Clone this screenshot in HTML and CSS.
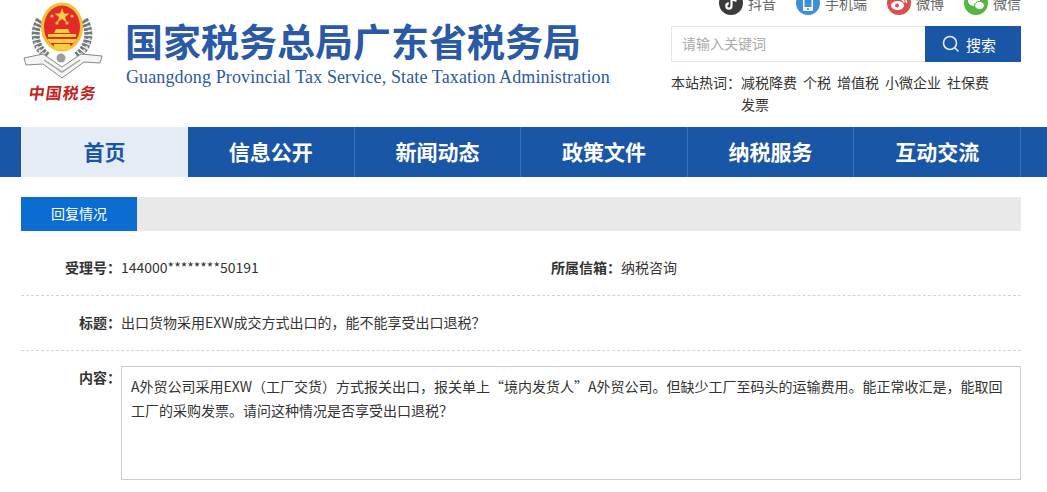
FILE: index.html
```html
<!DOCTYPE html>
<html>

<head>
    <meta charset="utf-8">
    <title>回复情况</title>
    <link rel="stylesheet" href="styles.css">
</head>

<body>
    <div class="header">
        <div class="logo">
            <svg class="emblem" viewBox="21 2 82 78" width="82" height="78">
                <!-- wreath -->
                <g fill="none" stroke="#74797d" stroke-width="8" stroke-dasharray="3 1.200">
                    <path d="M40 20 C33 31 34 46 47 56"/>
                    <path d="M84 20 C91 31 90 46 77 56"/>
                </g>
                <g fill="none" stroke="#e4e5e6" stroke-width="2.500" stroke-dasharray="2 2.200">
                    <path d="M38 22 C32 32 33 46 44 55"/>
                    <path d="M86 22 C92 32 91 46 80 55"/>
                </g>
                <!-- ribbon -->
                <path d="M24 58 L43 54 L62 67 L81 54 L102 56 L100 63 L84 62 L62 78 L43 64 L26 65 Z" fill="#f4f4f4" stroke="#85898c" stroke-width="1"/>
                <path d="M44 60 L62 72 L80 60" fill="none" stroke="#a3a6a8" stroke-width="1.500"/>
                <circle cx="61" cy="58" r="4.500" fill="#9a9da0"/>
                <!-- shield -->
                <ellipse cx="62" cy="27" rx="21" ry="24.500" fill="#f2c230"/>
                <ellipse cx="62" cy="27" rx="18" ry="21.500" fill="#e4292a"/>
                <polygon points="62,8 64,13.500 69.500,13.500 65,17 66.800,22.500 62,19 57.200,22.500 59,17 54.500,13.500 60,13.500" fill="#f6cf3d"/>
                <circle cx="52" cy="16" r="1.600" fill="#f6cf3d"/>
                <circle cx="72" cy="16" r="1.600" fill="#f6cf3d"/>
                <circle cx="57" cy="23" r="1.600" fill="#f6cf3d"/>
                <circle cx="67" cy="23" r="1.600" fill="#f6cf3d"/>
                <path d="M54 33 L56 29 H68 L70 33 Z" fill="#f6cf3d"/>
                <rect x="48" y="34" width="28" height="3" fill="#f6cf3d"/>
                <path d="M47 39 H77 L74 43 H50 Z" fill="#f6cf3d"/>
                <rect x="54" y="44" width="16" height="6" fill="#f6cf3d"/>
            </svg>
            <div class="logo-text">中国税务</div>
        </div>
        <div class="site-name">
            <div class="site-title">国家税务总局广东省税务局</div>
            <div class="site-en">Guangdong Provincial Tax Service, State Taxation Administration</div>
        </div>
        <div class="header-right">
            <div class="social">
                <a class="social-item">
                    <svg viewBox="0 0 24 24" width="24" height="24">
                        <circle cx="12" cy="12" r="12" fill="#3b3b3b"/>
                        <path d="M12.500 5 V15 A2.600 2.600 0 1 1 9.800 12.400 M12.500 5 C13 8 15 9.500 17.500 9.800" fill="none" stroke="#fff" stroke-width="2.200"/>
                    </svg>
                    抖音
                </a>
                <a class="social-item">
                    <svg viewBox="0 0 24 24" width="24" height="24">
                        <circle cx="12" cy="12" r="12" fill="#3f8fd8"/>
                        <rect x="7" y="4" width="10" height="16" rx="1.500" fill="#fff"/>
                        <rect x="8.500" y="6" width="7" height="10" fill="#3f8fd8"/>
                        <circle cx="12" cy="18" r="1" fill="#3f8fd8"/>
                    </svg>
                    手机端
                </a>
                <a class="social-item">
                    <svg viewBox="0 0 24 24" width="24" height="24">
                        <circle cx="12" cy="12" r="12" fill="#d9504f"/>
                        <ellipse cx="10.500" cy="14.500" rx="6.500" ry="4.500" fill="#fff"/>
                        <circle cx="10" cy="14.500" r="2" fill="#d9504f"/>
                        <path d="M14 6.500 A5 5 0 0 1 19.500 12 M14.500 9 A2.500 2.500 0 0 1 17 11.500" fill="none" stroke="#fff" stroke-width="1.500"/>
                    </svg>
                    微博
                </a>
                <a class="social-item">
                    <svg viewBox="0 0 24 24" width="24" height="24">
                        <circle cx="12" cy="12" r="12" fill="#56b63a"/>
                        <ellipse cx="10" cy="10" rx="6" ry="5" fill="#fff"/>
                        <ellipse cx="15.500" cy="14.500" rx="5" ry="4" fill="#fff" stroke="#56b63a"/>
                    </svg>
                    微信
                </a>
            </div>
            <div class="search">
                <div class="search-input">请输入关键词</div>
                <button type="button" class="search-btn">
                    <svg viewBox="0 0 18 18" width="18" height="18">
                        <circle cx="8" cy="8" r="6.500" fill="none" stroke="#e6ecf6" stroke-width="1.600"/>
                        <path d="M12.800 12.800 L16.500 16.500" stroke="#e6ecf6" stroke-width="1.600"/>
                    </svg>
                    搜索
                </button>
            </div>
            <div class="hot">
                <span class="hot-label">本站热词：</span>
                <div class="hot-list">
                    <a>减税降费</a>
                    <a>个税</a>
                    <a>增值税</a>
                    <a>小微企业</a>
                    <a>社保费</a>
                    <a>发票</a>
                </div>
            </div>
        </div>
    </div>

    <div class="nav">
        <ul class="nav-list">
            <li class="active">首页</li>
            <li>信息公开</li>
            <li>新闻动态</li>
            <li>政策文件</li>
            <li>纳税服务</li>
            <li>互动交流</li>
        </ul>
    </div>

    <div class="content">
        <div class="tab-bar">
            <div class="tab">回复情况</div>
        </div>
        <div class="row row-split">
            <div class="field">
                <span class="label">受理号：</span>
                <span class="value">144000********50191</span>
            </div>
            <div class="field">
                <span class="label">所属信箱：</span>
                <span class="value">纳税咨询</span>
            </div>
        </div>
        <div class="row">
            <div class="field">
                <span class="label">标题：</span>
                <span class="value">出口货物采用EXW成交方式出口的，能不能享受出口退税？</span>
            </div>
        </div>
        <div class="detail">
            <span class="label">内容：</span>
            <div class="detail-box">A外贸公司采用EXW（工厂交货）方式报关出口，报关单上“境内发货人”A外贸公司。但缺少工厂至码头的运输费用。能正常收汇是，能取回工厂的采购发票。请问这种情况是否享受出口退税？</div>
        </div>
    </div>
</body>

</html>
```

FILE: styles.css
```css
html,
body {
    overflow: hidden;
}

body {
    margin: 0;
    padding: 0;
    font-family: "Noto Sans CJK SC", "Liberation Sans", sans-serif;
    font-size: 14px;
    color: #333;
    background-color: #ffffff;
}

.header {
    display: flex;
    width: 1000px;
    height: 136px;
    margin: -9px 0 0 21px;
}

.logo {
    width: 82px;
    margin-left: 3px;
    padding-top: 11px;
}

.emblem {
    display: block;
    margin-left: -3px;
}

.logo-text {
    margin-left: 5px;
    font-size: 16px;
    line-height: 24px;
    font-weight: bold;
    letter-spacing: 1px;
    color: #c4231d;
    white-space: nowrap;
    transform: skewX(-8deg);
}

.site-name {
    width: 540px;
    margin-left: 20px;
    padding-top: 27px;
}

.site-title {
    margin-left: -1px;
    font-size: 38px;
    line-height: 44px;
    font-weight: bold;
    color: #2a59a6;
    white-space: nowrap;
}

.site-en {
    margin-top: 3px;
    font-family: "Liberation Serif", serif;
    font-size: 18px;
    line-height: 24px;
    letter-spacing: 0.12px;
    color: #2a59a6;
    white-space: nowrap;
}

.header-right {
    width: 350px;
    margin-left: auto;
}

.social {
    display: flex;
    justify-content: flex-end;
    gap: 20px;
    height: 24px;
}

.social-item {
    display: flex;
    align-items: center;
    gap: 5px;
    line-height: 24px;
    color: #666;
}

.search {
    display: flex;
    height: 36px;
    margin-top: 11px;
}

.search-input {
    flex: 1;
    padding-left: 10px;
    border: 1px solid #e6e6e6;
    border-right: none;
    line-height: 32px;
    color: #aaa;
}

.search-btn {
    display: flex;
    align-items: center;
    justify-content: center;
    gap: 6px;
    width: 96px;
    padding: 0 8px 0 0;
    border: none;
    background-color: #1a56a6;
    color: #ffffff;
    font-family: inherit;
    font-size: 15px;
}

.hot {
    display: flex;
    margin-top: 9px;
    line-height: 22px;
}

.hot-label {
    width: 70px;
}

.hot-list {
    display: flex;
    flex-wrap: wrap;
    column-gap: 6px;
    width: 280px;
}

.nav {
    height: 50px;
    background-color: #1a56a6;
}

.nav-list {
    display: flex;
    width: 1000px;
    margin: 0 0 0 21px;
    padding: 0;
    list-style: none;
}

.nav-list li {
    flex: 1;
    height: 50px;
    border-right: 1px solid #3f71b6;
    box-sizing: border-box;
    text-align: center;
    font-size: 21px;
    line-height: 48px;
    font-weight: bold;
    color: #ffffff;
}

.nav-list li.active {
    flex: 0 0 167px;
    border-right: none;
    background-color: #e6ecf6;
    color: #1a56a6;
}

.content {
    width: 1000px;
    margin: 20px 0 0 21px;
}

.tab-bar {
    height: 34px;
    background-color: #e9e9e9;
}

.tab {
    width: 116px;
    height: 34px;
    background-color: #0b6cd2;
    text-align: center;
    line-height: 32px;
    color: #ffffff;
}

.row {
    display: flex;
    height: 54px;
    border-bottom: 1px dashed #d4d4d4;
    line-height: 52px;
}

.row-split {
    height: 64px;
    line-height: 72px;
}

.field {
    display: flex;
    flex: 1;
}

.label {
    flex: none;
    width: 100px;
    text-align: right;
    font-weight: bold;
}

.detail {
    display: flex;
    align-items: flex-start;
    margin-top: 15px;
}

.detail .label {
    line-height: 22px;
}

.detail-box {
    box-sizing: border-box;
    width: 900px;
    height: 114px;
    padding: 7px 9px;
    border: 1px solid #ccc;
    line-height: 24px;
}
```
